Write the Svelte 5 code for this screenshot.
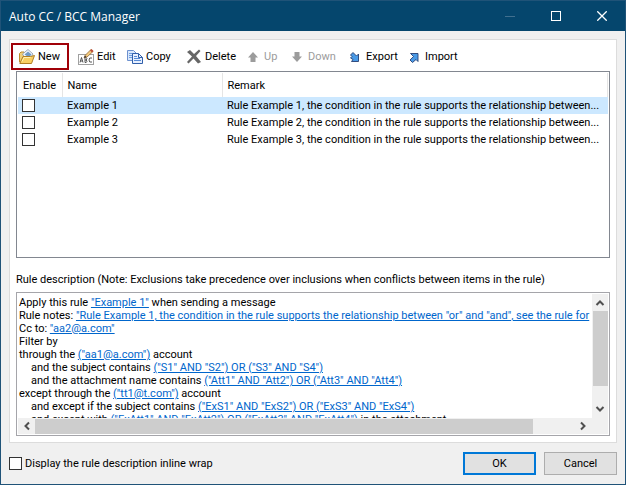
<script lang="ts">
  interface Rule {
    name: string;
    remark: string;
    enabled: boolean;
  }

  interface Part {
    text: string;
    link?: boolean;
  }

  interface Line {
    indent?: boolean;
    parts: Part[];
  }

  const summary = (n: number) => `Rule Example ${n}, the condition in the rule supports the relationship between`;

  let rules: Rule[] = $state([1, 2, 3].map((n) => ({ name: `Example ${n}`, remark: summary(n), enabled: false })));
  let selected = $state(0);
  let wrap = $state(false);

  const actions = [
    { id: 'new', label: 'New' },
    { id: 'edit', label: 'Edit' },
    { id: 'copy', label: 'Copy' },
    { id: 'delete', label: 'Delete' },
    { id: 'up', label: 'Up', disabled: true },
    { id: 'down', label: 'Down', disabled: true },
    { id: 'export', label: 'Export' },
    { id: 'import', label: 'Import' },
  ];

  const lines: Line[] = $derived([
    { parts: [{ text: 'Apply this rule ' }, { text: `"${rules[selected].name}"`, link: true }, { text: ' when sending a message' }] },
    { parts: [{ text: 'Rule notes: ' }, { text: `"${rules[selected].remark} "or" and "and", see the rule for`, link: true }] },
    { parts: [{ text: 'Cc to: ' }, { text: '"aa2@a.com"', link: true }] },
    { parts: [{ text: 'Filter by' }] },
    { parts: [{ text: 'through the ' }, { text: '("aa1@a.com")', link: true }, { text: ' account' }] },
    { indent: true, parts: [{ text: 'and the subject contains ' }, { text: '("S1" AND "S2") OR ("S3" AND "S4")', link: true }] },
    { indent: true, parts: [{ text: 'and the attachment name contains ' }, { text: '("Att1" AND "Att2") OR ("Att3" AND "Att4")', link: true }] },
    { parts: [{ text: 'except through the ' }, { text: '("tt1@t.com")', link: true }, { text: ' account' }] },
    { indent: true, parts: [{ text: 'and except if the subject contains ' }, { text: '("ExS1" AND "ExS2") OR ("ExS3" AND "ExS4")', link: true }] },
    { indent: true, parts: [{ text: 'and except with ' }, { text: '("ExAtt1" AND "ExAtt2") OR ("ExAtt3" AND "ExAtt4")', link: true }, { text: ' in the attachment' }] },
  ]);
</script>

{#snippet icon(id: string)}
  <svg class="icon" width="16" height="16" viewBox="0 0 16 16" fill="none" aria-hidden="true">
    {#if id === 'new'}
      <path d="M0.500 13V4.500L2 3h3l1 1.500h6v8z" fill="#f0cf78" stroke="#b98a2c" />
      <path d="M3.500 5L9 0.500l5 4.500-3 5-5-1z" fill="#f4f8fd" stroke="#8794a8" stroke-width="0.800" />
      <path d="M5.500 5.500L9 2.500l3.500 3-2.500 3z" fill="#6f9ac6" />
      <path d="M0.800 14.500L4 7.500h7.500l4-1-3 8z" fill="#f9cf62" stroke="#b07f24" />
      <path d="M3 12.500l2-4h6.500" stroke="#fff0b0" />
    {:else if id === 'edit'}
      <rect x="0.500" y="5.500" width="15" height="10" fill="#fff" stroke="#a0a0a0" />
      <path d="M2 13.500l1.500-5 1.500 5M2.500 12h2M7 13.500v-5h1.200q1.500 1.200 0 2.500H7m1.200 0q1.700 1.200 0 2.500H7M14 9q-3-1-3 2t3 2" stroke="#444" stroke-width="0.900" />
      <path d="M6 9l1-2.500L13 0.500l2 2-6 5.500z" fill="#f3ca7c" stroke="#93683a" stroke-width="0.800" />
      <path d="M12 1.500L13.500 0l2 2L14 3.500z" fill="#bd4937" />
      <path d="M6 9l1-2.500L8.500 8z" fill="#333" />
    {:else if id === 'copy'}
      <path d="M0.500 1.500h6l3 3v7h-9z" fill="#d9e8fc" stroke="#6d91cf" />
      <path d="M2 4.500h4M2 6.500h5M2 8.500h5" stroke="#6f9de0" />
      <path d="M5.500 4.500h6l4 4v6h-10z" fill="#e7f0ff" stroke="#315faa" />
      <path d="M11.500 4.500v4h4" stroke="#315faa" />
      <path d="M7 7.500h3M7 9.500h6M7 11.500h7" stroke="#588bd6" />
    {:else if id === 'delete'}
      <path d="M1 3l3-2 4 4 5-4.500 1.500 1.500-4.500 5 5 6-3 1.500-4.500-5-5 5L1 13l5-5.500z" fill="#666" />
    {:else if id === 'up'}
      <path d="M8 3l5 5.500h-2.500V13h-5V8.500H3z" fill="#9c9c9c" />
    {:else if id === 'down'}
      <path d="M5.500 3h5v4.500H13L8 13 3 7.500h2.500z" fill="#9c9c9c" />
    {:else if id === 'export'}
      <path d="M3.500 6l2.500-2.500 3.500 3.500 2-2v7.500H4.500l1.500-2-2.500-1.500 1.500-1.500z" fill="#4a9ae6" stroke="#263e72" stroke-width="0.900" />
    {:else if id === 'import'}
      <path d="M4.500 4.500h7.500v8l-2-2-3.500 3-2.500-2.500L7.500 7.500z" fill="#4a9ae6" stroke="#263e72" stroke-width="0.900" />
    {/if}
  </svg>
{/snippet}

{#snippet arrow(d: string)}
  <svg width="10" height="10" viewBox="0 0 10 10" fill="none" aria-hidden="true">
    <path {d} stroke="#505050" stroke-width="2" />
  </svg>
{/snippet}

<div class="window">
  <header class="titlebar">
    <h1>Auto CC / BCC Manager</h1>
    <div class="controls">
      <button aria-label="Minimize" disabled>
        <svg width="10" height="10" viewBox="0 0 10 10"><path d="M0 5.500h10" stroke="#41708f" /></svg>
      </button>
      <button aria-label="Maximize">
        <svg width="10" height="10" viewBox="0 0 10 10"><rect x="0.500" y="0.500" width="9" height="9" fill="none" stroke="#fff" /></svg>
      </button>
      <button aria-label="Close">
        <svg width="10" height="10" viewBox="0 0 10 10"><path d="M0.300 0.300l9.400 9.400M9.700 0.300L0.300 9.700" stroke="#fff" stroke-width="1.300" /></svg>
      </button>
    </div>
  </header>

  <main class="panel">
    <div class="toolbar" role="toolbar" aria-label="Rules">
      {#each actions as action (action.id)}
        <button class="tool" class:marked={action.id === 'new'} disabled={action.disabled}>
          {@render icon(action.id)}
          <span>{action.label}</span>
        </button>
      {/each}
    </div>

    <div class="list">
      <table>
        <colgroup>
          <col class="col-enable" />
          <col class="col-name" />
          <col />
        </colgroup>
        <thead>
          <tr><th>Enable</th><th>Name</th><th>Remark</th></tr>
        </thead>
        <tbody>
          {#each rules as rule, i (rule.name)}
            <tr class:selected={i === selected} onclick={() => (selected = i)}>
              <td><input type="checkbox" aria-label="Enable {rule.name}" bind:checked={rule.enabled} /></td>
              <td>{rule.name}</td>
              <td>{rule.remark}...</td>
            </tr>
          {/each}
        </tbody>
      </table>
    </div>

    <h2>Rule description (Note: Exclusions take precedence over inclusions when conflicts between items in the rule)</h2>

    <div class="description">
      <div class="text" class:wrap>
        {#each lines as line}
          <p class:indent={line.indent}>{#each line.parts as part}{#if part.link}<a href="#edit">{part.text}</a>{:else}{part.text}{/if}{/each}</p>
        {/each}
      </div>
      <div class="scroll vertical">
        {@render arrow('M1.500 7L5 3.500 8.500 7')}
        <div class="thumb"></div>
        {@render arrow('M1.500 3L5 6.500 8.500 3')}
      </div>
      <div class="scroll horizontal">
        {@render arrow('M7 1.500L3.500 5 7 8.500')}
        <div class="thumb"></div>
        {@render arrow('M3 1.500L6.500 5 3 8.500')}
      </div>
      <div class="corner"></div>
    </div>
  </main>

  <footer>
    <label><input type="checkbox" bind:checked={wrap} />Display the rule description inline wrap</label>
    <button class="push primary">OK</button>
    <button class="push">Cancel</button>
  </footer>
</div>

<style>
  :global(body) {
    margin: 0;
  }

  .window {
    display: flex;
    flex-direction: column;
    box-sizing: border-box;
    min-height: 100vh;
    border: 1px solid #1f5378;
    background: #f0f0f0;
    color: #000;
    font-family: Tahoma, Roboto, sans-serif;
    font-size: 11px;
    line-height: 13px;
  }

  button {
    padding: 0;
    border: 0;
    background: none;
    color: inherit;
    font: inherit;
  }

  h1,
  h2,
  p {
    margin: 0;
    font-size: inherit;
    font-weight: normal;
  }

  .titlebar {
    display: flex;
    align-items: center;
    justify-content: space-between;
    height: 30px;
    padding-left: 8px;
    background: #05466d;
    color: #fff;
  }

  .titlebar h1 {
    font-family: 'Segoe UI', 'Open Sans', sans-serif;
    font-size: 12px;
  }

  .controls {
    display: flex;
  }

  .controls button {
    display: grid;
    place-items: center;
    width: 46px;
    height: 28px;
  }

  .panel {
    display: flex;
    flex: 1;
    flex-direction: column;
    margin: 8px 8px 0;
    padding: 3px 6px 6px;
    border: 1px solid #dcdcdc;
    background: #fff;
  }

  .toolbar {
    display: grid;
    grid-template-columns: 62px 49px 59px 59px 44px 58px 59px auto;
    margin-left: -5px;
  }

  .tool {
    display: flex;
    align-items: center;
    justify-self: start;
    gap: 3px;
    height: 27px;
    padding: 0 5px;
  }

  .tool:disabled {
    color: #9c9c9c;
  }

  .marked {
    width: 58px;
    padding: 0 6px;
    border: 2px solid #a00008;
  }

  .icon {
    flex: none;
  }

  .list {
    flex: 1;
    margin-top: 1px;
    padding: 1px;
    border: 1px solid #828790;
  }

  table {
    width: 100%;
    border-collapse: collapse;
    table-layout: fixed;
  }

  .col-enable {
    width: 44px;
  }

  .col-name {
    width: 160px;
  }

  th {
    height: 24px;
    padding: 0 5px;
    border-right: 1px solid #e5e5e5;
    font-weight: normal;
    text-align: left;
  }

  td {
    height: 17px;
    padding: 0 5px;
    overflow: hidden;
    text-overflow: ellipsis;
    white-space: nowrap;
  }

  td:first-child {
    padding: 0 4px;
  }

  .selected {
    background: #cce8ff;
  }

  input[type='checkbox'] {
    display: block;
    width: 13px;
    height: 13px;
    margin: 0;
    border: 1px solid #333;
    appearance: none;
    background: #fff;
  }

  input[type='checkbox']:checked {
    background: #333;
    box-shadow: inset 0 0 0 2px #fff;
  }

  h2 {
    margin: 15px 0 6px;
    white-space: nowrap;
  }

  .description {
    display: grid;
    grid-template: 124px 16px / minmax(0, 1fr) 16px;
    padding: 1px;
    border: 1px solid #a5a5aa;
  }

  .text {
    overflow: hidden;
    padding: 2px 0 0 1px;
    white-space: nowrap;
  }

  .wrap {
    white-space: normal;
  }

  .indent {
    padding-left: 12px;
  }

  a {
    color: #0066cc;
    text-decoration: underline;
    text-underline-offset: 1px;
  }

  .scroll {
    display: flex;
    align-items: center;
    justify-content: space-between;
    background: #f0f0f0;
  }

  .vertical {
    flex-direction: column;
    padding: 4px 0;
  }

  .horizontal {
    padding: 0 4px;
  }

  .thumb {
    background: #cdcdcd;
  }

  .vertical .thumb {
    width: 15px;
    height: 75px;
    margin: 3px 0 auto;
  }

  .horizontal .thumb {
    width: 88%;
    height: 15px;
    margin: 0 auto 0 3px;
  }

  .corner {
    background: #f0f0f0;
  }

  footer {
    display: flex;
    align-items: center;
    gap: 8px;
    padding: 9px 8px;
  }

  label {
    display: flex;
    align-items: center;
    gap: 3px;
    margin-right: auto;
  }

  .push {
    width: 73px;
    height: 23px;
    border: 1px solid #adadad;
    background: #e1e1e1;
  }

  .primary {
    border: 2px solid #0078d7;
  }
</style>
